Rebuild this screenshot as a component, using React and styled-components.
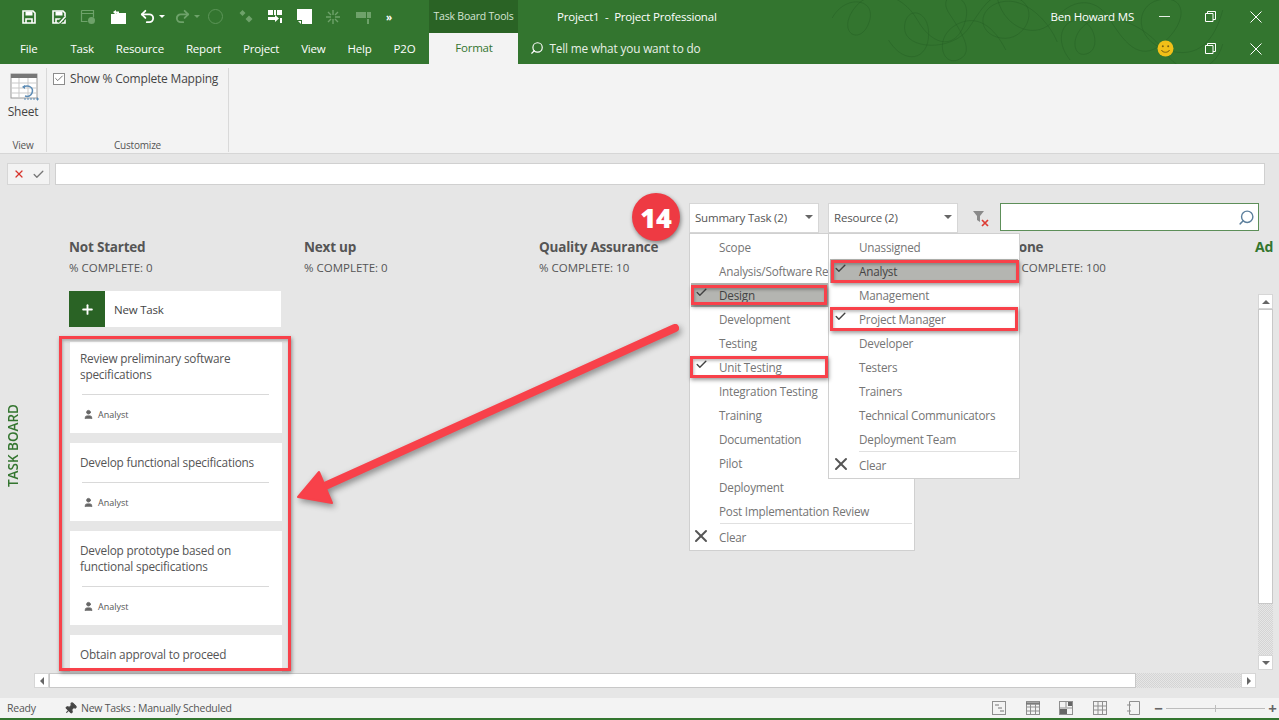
import React from "react";
import styled, { createGlobalStyle } from "styled-components";
import { Undo2, Redo2, Search, Check, X, Plus, Pin, User } from "lucide-react";

const GlobalStyle = createGlobalStyle`
    html, body {
        margin: 0;
        padding: 0;
        background: #e6e6e6;
    }
    * {
        box-sizing: border-box;
    }
    body {
        font-family: "Open Sans", "Noto Sans", sans-serif;
        color: #555;
        letter-spacing: -0.2px;
    }
`;

const GREEN = "#33752f";
const DARK_GREEN = "#2a6325";
const FADED = "#6ea26a";
const RED = "#f8414a";

const summaryItems = [
    { label: "Scope" },
    { label: "Analysis/Software Re" },
    { label: "Design", checked: true, selected: true },
    { label: "Development" },
    { label: "Testing" },
    { label: "Unit Testing", checked: true },
    { label: "Integration Testing" },
    { label: "Training" },
    { label: "Documentation" },
    { label: "Pilot" },
    { label: "Deployment" },
    { label: "Post Implementation Review" },
];

const resourceItems = [
    { label: "Unassigned" },
    { label: "Analyst", checked: true, selected: true },
    { label: "Management" },
    { label: "Project Manager", checked: true },
    { label: "Developer" },
    { label: "Testers" },
    { label: "Trainers" },
    { label: "Technical Communicators" },
    { label: "Deployment Team" },
];

const columns = [
    { name: "Not Started", pct: 0 },
    { name: "Next up", pct: 0 },
    { name: "Quality Assurance", pct: 10 },
    { name: "", pct: null },
    { name: "Done", pct: 100 },
];

const tasks = [
    { title: "Review preliminary software specifications", owner: "Analyst" },
    { title: "Develop functional specifications", owner: "Analyst" },
    { title: "Develop prototype based on functional specifications", owner: "Analyst" },
    { title: "Obtain approval to proceed" },
];

const tabs = ["File", "Task", "Resource", "Report", "Project", "View", "Help", "P2O"];

// quick access toolbar drawings, white on green
const SaveIcon = ({ pen }) => (
    <svg width="16" height="16" viewBox="0 0 16 16" fill="none" stroke="#fff" strokeWidth="1.6">
        <path d="M2 2h10l2 2v10H2z" />
        <path d="M4.500 2.500h7v4h-7z" fill="#fff" stroke="none" />
        <path d="M5 14v-4h6v4" />
        {pen && <path d="M8 14l6-6" stroke={GREEN} strokeWidth="4" />}
        {pen && <path d="M8.500 14l5.500-6" strokeWidth="1.400" />}
    </svg>
);

const FolderIcon = () => (
    <svg width="17" height="16" viewBox="0 0 17 16">
        <path d="M1 5h5l1-1h9v11H1z" fill="#fff" />
        <path d="M3 3l3-2v1.500h3v2H6V6z" fill="#fff" />
    </svg>
);

const GhostDoc = () => (
    <svg width="16" height="16" viewBox="0 0 16 16" fill="none" stroke={FADED} strokeWidth="1.200">
        <path d="M1.500 1.500h12v7M1.500 1.500v11h6M1.500 4.500h12" />
        <circle cx="11.500" cy="11.500" r="3.500" fill={FADED} stroke="none" />
    </svg>
);

const Diamonds = () => (
    <svg width="16" height="16" viewBox="0 0 16 16" fill={FADED}>
        <path d="M4.500 1l3 3-3 3-3-3zM11 6.500l3.500 3.500-3.500 3.500-3.500-3.500z" />
    </svg>
);

const LinkIcon = () => (
    <svg width="16" height="16" viewBox="0 0 16 16" fill="#fff">
        <path d="M1 1h5v5H1zM10 1h5v5h-5zM7 1h2v5H7z" />
        <path d="M1 8h7V6l4 3.500L8 13v-2H1z" />
        <path d="M13 9h2v5h-2z" />
    </svg>
);

const PageIcon = () => (
    <svg width="15" height="15" viewBox="0 0 15 15" fill="#fff">
        <path d="M0 0h15v15H5V11H0z" />
        <path d="M1 12h3v3z" />
    </svg>
);

const SplitIcon = () => (
    <svg width="14" height="14" viewBox="0 0 14 14" stroke={FADED} strokeWidth="1.400">
        <path d="M7 0v5M7 9v5M0 7h5M9 7h5M2 2l3 3M12 2L9 5M2 12l3-3M12 12L9 9" />
    </svg>
);

const GhostBars = () => (
    <svg width="16" height="16" viewBox="0 0 16 16" fill={FADED}>
        <path d="M0 3h10v6H0zM11 3h4v6h-4z" />
        <path d="M11 10h2v5h-2z" />
    </svg>
);

const SheetIcon = () => (
    <svg width="30" height="30" viewBox="0 0 30 30" fill="none">
        <rect x="1" y="1" width="26" height="24" fill="#fff" stroke="#9a9a9a" />
        <rect x="1" y="1" width="26" height="4" fill="#777" />
        <path d="M1 10h26M1 15h26M1 20h26M9 5v20M18 5v20" stroke="#c9c9c9" />
        <path d="M13 14c6-3 11 1 9 6-1 3-4 4-7 3" stroke="#5b8bb5" strokeWidth="1.500" />
        <path d="M12 14l3-2v4z" fill="#5b8bb5" />
        <path d="M14 26h14" stroke="#5b8bb5" strokeDasharray="2 1" />
        <path d="M27 24l2 2-2 2z" fill="#5b8bb5" />
    </svg>
);

const FunnelClear = () => (
    <svg width="18" height="18" viewBox="0 0 18 18">
        <path d="M1 2h11L8 7v6L5 11V7z" fill="#8a8a8a" />
        <path d="M10 11l6 6M16 11l-6 6" stroke="#dd3b33" strokeWidth="1.700" />
    </svg>
);

const Smiley = () => (
    <svg width="17" height="17" viewBox="0 0 17 17">
        <circle cx="8.500" cy="8.500" r="8" fill="#f2c018" />
        <circle cx="5.800" cy="6.300" r="1" fill="#7a6210" />
        <circle cx="11.200" cy="6.300" r="1" fill="#7a6210" />
        <path d="M4.500 10c1 3 7 3 8 0" fill="none" stroke="#7a6210" strokeWidth="1" />
    </svg>
);

const RestoreIcon = () => (
    <svg width="11" height="11" viewBox="0 0 11 11" fill="none" stroke="#fff">
        <path d="M.5 2.500h7.500v8H.5zM2.500 2.500V.5h8v8H8" />
    </svg>
);

const ThinX = () => (
    <svg width="12" height="12" viewBox="0 0 12 12" stroke="#fff">
        <path d="M.5.5l11 11M11.500.5l-11 11" />
    </svg>
);

const StatusView = ({ kind }) => (
    <svg width="15" height="14" viewBox="0 0 15 14" fill="none" stroke="#8f8f8f">
        {kind !== "form" && <rect x=".5" y=".5" width="13" height="13" fill="#f3f3f3" />}
        {kind === "gantt" && <path d="M3 4h4M6 7h4M8 10h4" stroke="#777" />}
        {kind === "calendar" && <path d="M.5 2h13M.5 3h13" stroke="#555" />}
        {kind === "calendar" && <path d="M.5 6h13M.5 10h13M4.500 3v10M9.500 3v10" />}
        {kind === "board" && <path d="M.5 7h13M7 .5v6" />}
        {kind === "board" && <path d="M1 8h7v5H1z M9 1h4v4H9z" fill="#666" stroke="none" />}
        {kind === "grid" && <path d="M.5 5h13M.5 9h13M5 .5v13M9.500 .5v13" />}
        {kind === "form" && <path d="M3.500 .5h10v13h-10zM1 4h4M1 10h4" />}
    </svg>
);

const ArrowOverlay = () => (
    <ArrowSvg viewBox="0 0 1279 720">
        <path d="M675 328L325 486" stroke={RED} strokeWidth="8" strokeLinecap="round" fill="none" />
        <path d="M298 497L319 472L332 503z" fill={RED} stroke={RED} strokeWidth="2" strokeLinejoin="round" />
    </ArrowSvg>
);

const Swirls = () => (
    <SwirlSvg viewBox="0 0 560 64" preserveAspectRatio="none" fill="none" stroke="#235c22" strokeOpacity=".45" strokeWidth="1">
        <path d="M4 18C20 -6 60 -2 50 22S10 34 30 10 90 -8 110 20s50 30 60 0S130 -10 150 14s30 40 10 46-30-24 0-36 50 10 60 26" />
        <path d="M74 40c20 26 50 20 50-6s-30-28-30-6 60 24 80 0 30-40 60-30 10 44-20 40-30-30 0-36 60 20 70 40" />
        <path d="M210 0c10 30 50 40 70 20s50-26 70 0 40 44 70 20 20-46-10-40-30 40 10 50 60-10 70-40" />
        <path d="M300 60c-20-20-10-40 10-40s30 30 10 34-20-26 10-34 70 10 90 34 60 20 70-10" />
    </SwirlSvg>
);

const MenuList = ({ items, width, height, offset, indent }) => (
    <Menu $width={width} $height={height} $left={offset}>
        {items.map((item) => (
            <MenuItem key={item.label} $selected={item.selected}>
                <CheckSlot $indent={indent}>{item.checked && <Check size={13} strokeWidth={2.6} />}</CheckSlot>
                <span>{item.label}</span>
            </MenuItem>
        ))}
        <MenuDivider />
        <ClearRow>
            <CheckSlot $indent={indent} $clear>
                <X size={20} strokeWidth={2.4} />
            </CheckSlot>
            <span>Clear</span>
        </ClearRow>
    </Menu>
);

const TaskCard = ({ task }) => (
    <Card>
        <CardTitle>{task.title}</CardTitle>
        {task.owner && (
            <>
                <CardRule />
                <CardOwner>
                    <User size={11} fill="#666" strokeWidth={2} />
                    <span>{task.owner}</span>
                </CardOwner>
            </>
        )}
    </Card>
);

export default function App() {
    return (
        <Page>
            <GlobalStyle />
            <Header>
                <Swirls />
                <TitleRow>
                    <QuickAccess>
                        <QuickSlot><SaveIcon /></QuickSlot>
                        <QuickSlot><SaveIcon pen /></QuickSlot>
                        <QuickSlot><GhostDoc /></QuickSlot>
                        <QuickSlot><FolderIcon /></QuickSlot>
                        <QuickSlot $wide>
                            <Undo2 size={17} color="#fff" strokeWidth={2.6} />
                            <Caret />
                        </QuickSlot>
                        <QuickSlot $wide>
                            <Redo2 size={17} color={FADED} strokeWidth={2.6} />
                            <Caret $dim />
                        </QuickSlot>
                        <QuickSlot><GhostCircle /></QuickSlot>
                        <QuickSlot><Diamonds /></QuickSlot>
                        <QuickSlot><LinkIcon /></QuickSlot>
                        <QuickSlot><PageIcon /></QuickSlot>
                        <QuickSlot><SplitIcon /></QuickSlot>
                        <QuickSlot><GhostBars /></QuickSlot>
                        <MoreMark>»</MoreMark>
                    </QuickAccess>
                    <ContextTab>Task Board Tools</ContextTab>
                    <DocTitle>Project1&nbsp; -&nbsp; Project Professional</DocTitle>
                    <UserName>Ben Howard MS</UserName>
                    <MinimizeMark />
                    <WindowButton><RestoreIcon /></WindowButton>
                    <WindowButton><ThinX /></WindowButton>
                </TitleRow>
                <TabRow>
                    {tabs.map((tab) => (
                        <Tab key={tab} $file={tab === "File"}>{tab}</Tab>
                    ))}
                    <ActiveTab>Format</ActiveTab>
                    <TellMe>
                        <Search size={14} color="#fff" style={{ transform: "scaleX(-1)" }} />
                        <span>Tell me what you want to do</span>
                    </TellMe>
                    <SmileSlot><Smiley /></SmileSlot>
                    <WindowButton><RestoreIcon /></WindowButton>
                    <WindowButton><ThinX /></WindowButton>
                </TabRow>
            </Header>

            <Ribbon>
                <RibbonGroup $width={47}>
                    <GroupBody $center>
                        <SheetIcon />
                        <SheetLabel>Sheet</SheetLabel>
                    </GroupBody>
                    <GroupLabel>View</GroupLabel>
                </RibbonGroup>
                <RibbonGroup $width={182}>
                    <GroupBody>
                        <CheckRow>
                            <CheckBox><Check size={11} strokeWidth={2} /></CheckBox>
                            <span>Show % Complete Mapping</span>
                        </CheckRow>
                    </GroupBody>
                    <GroupLabel>Customize</GroupLabel>
                </RibbonGroup>
            </Ribbon>

            <FormulaBar>
                <FormulaButtons>
                    <X size={12} color="#d8342c" strokeWidth={2.4} />
                    <Check size={13} color="#777" strokeWidth={2.4} />
                </FormulaButtons>
                <FormulaInput />
            </FormulaBar>

            <Board>
                <FilterBar>
                    <FilterSelect $width={130}>
                        <span>Summary Task (2)</span>
                        <SelectCaret />
                    </FilterSelect>
                    <FilterSelect $width={130}>
                        <span>Resource (2)</span>
                        <SelectCaret />
                    </FilterSelect>
                    <FunnelSlot><FunnelClear /></FunnelSlot>
                    <SearchBox>
                        <Search size={17} color="#5c7f9c" style={{ transform: "scaleX(-1)" }} />
                    </SearchBox>
                </FilterBar>

                <BoardBody>
                    <Rail>
                        <RailText>TASK BOARD</RailText>
                    </Rail>
                    <Columns>
                        {columns.map((col, i) => (
                            <Column key={i}>
                                <ColumnName>{col.name}</ColumnName>
                                <ColumnPct>{col.pct !== null && `% COMPLETE: ${col.pct}`}</ColumnPct>
                                {i === 0 && (
                                    <>
                                        <NewTask>
                                            <PlusBox><Plus size={15} color="#fff" strokeWidth={3} /></PlusBox>
                                            <span>New Task</span>
                                        </NewTask>
                                        <CardList>
                                            {tasks.map((task) => (
                                                <TaskCard key={task.title} task={task} />
                                            ))}
                                        </CardList>
                                    </>
                                )}
                            </Column>
                        ))}
                        <AddColumn>Ad</AddColumn>
                    </Columns>
                    <VScroll>
                        <ScrollBtn><TriUp /></ScrollBtn>
                        <VThumb />
                        <VTrack />
                        <ScrollBtn><TriDown /></ScrollBtn>
                    </VScroll>
                </BoardBody>

                <HScroll>
                    <ScrollBtn><TriLeft /></ScrollBtn>
                    <HThumb />
                    <HTrack />
                    <ScrollBtn><TriRight /></ScrollBtn>
                </HScroll>

                <MenuList items={summaryItems} width={226} height={318} offset={689} indent={28} />
                <MenuList items={resourceItems} width={192} height={246} offset={828} indent={29} />
            </Board>

            <StatusBar>
                <ReadyText>Ready</ReadyText>
                <Pin size={13} color="#444" fill="#444" style={{ transform: "rotate(45deg)" }} />
                <StatusText>New Tasks : Manually Scheduled</StatusText>
                <StatusViews>
                    <StatusView kind="gantt" />
                    <StatusView kind="calendar" />
                    <StatusView kind="board" />
                    <StatusView kind="grid" />
                    <StatusView kind="form" />
                </StatusViews>
                <ZoomMark>−</ZoomMark>
                <ZoomTrack />
                <ZoomMark>+</ZoomMark>
            </StatusBar>

            <Badge>14</Badge>
            <ArrowOverlay />
            <Callout $x={59} $y={336} $w={232} $h={335} />
            <Callout $x={691} $y={285} $w={136} $h={20} />
            <Callout $x={690} $y={356} $w={138} $h={22} />
            <Callout $x={831} $y={260} $w={188} $h={23} />
            <Callout $x={830} $y={307} $w={188} $h={24} />
        </Page>
    );
}

const Page = styled.div`
    position: relative;
    width: 1279px;
    height: 720px;
    overflow: hidden;
    display: flex;
    flex-direction: column;
    background: #e6e6e6;
`;

const Header = styled.header`
    position: relative;
    height: 64px;
    background: ${GREEN};
    color: #fff;
    flex-shrink: 0;
`;

const SwirlSvg = styled.svg`
    position: absolute;
    left: 829px;
    top: 0;
    width: 450px;
    height: 64px;
`;

const TitleRow = styled.div`
    position: relative;
    display: flex;
    align-items: center;
    height: 33px;
`;

const QuickAccess = styled.div`
    display: flex;
    align-items: center;
    width: 429px;
    padding-left: 21px;
`;

const QuickSlot = styled.div`
    width: ${(p) => (p.$wide ? "34.500px" : "29.500px")};
    display: flex;
    align-items: center;
    gap: 3px;
`;

const Caret = styled.span`
    width: 0;
    height: 0;
    border-left: 3px solid transparent;
    border-right: 3px solid transparent;
    border-top: 3px solid ${(p) => (p.$dim ? FADED : "#fff")};
`;

const GhostCircle = styled.span`
    display: block;
    width: 15px;
    height: 15px;
    border: 1px solid #5c9558;
    border-radius: 50%;
`;

const MoreMark = styled.span`
    font-size: 10px;
    margin-left: 1px;
    font-weight: 700;
`;

const ContextTab = styled.div`
    width: 89px;
    height: 33px;
    background: ${DARK_GREEN};
    font-size: 10.500px;
    line-height: 33px;
    text-align: center;
    white-space: nowrap;
    color: #d5e4d3;
`;

const DocTitle = styled.div`
    margin-left: 39px;
    font-size: 11.500px;
    white-space: nowrap;
    flex: 1;
`;

const UserName = styled.div`
    font-size: 11.500px;
    white-space: nowrap;
    margin-right: 25px;
`;

const MinimizeMark = styled.span`
    display: block;
    flex-shrink: 0;
    width: 11px;
    height: 1px;
    background: #e6efe5;
    margin-right: 17px;
`;

const WindowButton = styled.div`
    width: 46px;
    display: flex;
    justify-content: center;
    flex-shrink: 0;
`;

const TabRow = styled.div`
    position: relative;
    display: flex;
    align-items: center;
    height: 31px;
    padding-left: 9px;
`;

const Tab = styled.div`
    padding: 0 11px 1px;
    margin-right: ${(p) => (p.$file ? "11px" : "0")};
    font-size: 11.500px;
    letter-spacing: -0.2px;
    white-space: nowrap;
`;

const ActiveTab = styled.div`
    width: 89px;
    height: 31px;
    margin-left: 3px;
    background: #f3f3f3;
    color: ${GREEN};
    font-size: 11.500px;
    line-height: 29px;
    text-align: center;
`;

const TellMe = styled.div`
    display: flex;
    align-items: center;
    gap: 5px;
    margin-left: 12px;
    padding-bottom: 1px;
    font-size: 11.800px;
    letter-spacing: -0.15px;
    color: #e8f0e7;
    flex: 1;
`;

const SmileSlot = styled.div`
    margin-right: 13px;
    display: flex;
`;

const Ribbon = styled.section`
    display: flex;
    height: 90px;
    flex-shrink: 0;
    background: #f3f3f3;
    border-bottom: 1px solid #d6d6d6;
    padding-top: 4px;
`;

const RibbonGroup = styled.div`
    width: ${(p) => p.$width}px;
    display: flex;
    flex-direction: column;
    border-right: 1px solid #d9d9d9;
    margin-bottom: 1px;
`;

const GroupBody = styled.div`
    flex: 1;
    display: flex;
    flex-direction: column;
    align-items: ${(p) => (p.$center ? "center" : "flex-start")};
    padding-top: ${(p) => (p.$center ? "5px" : "2px")};
    padding-left: ${(p) => (p.$center ? "3px" : "6px")};
`;

const SheetLabel = styled.span`
    font-size: 12px;
    line-height: 16px;
    margin-top: 1px;
    margin-left: -3px;
    color: #444;
`;

const GroupLabel = styled.div`
    font-size: 10px;
    line-height: 14px;
    text-align: center;
    color: #555;
`;

const CheckRow = styled.label`
    display: flex;
    align-items: center;
    gap: 5px;
    font-size: 12px;
    color: #444;
    white-space: nowrap;
`;

const CheckBox = styled.span`
    width: 12px;
    height: 12px;
    border: 1px solid #8c8c8c;
    background: #fff;
    display: flex;
    align-items: center;
    justify-content: center;
    color: #555;
`;

const FormulaBar = styled.div`
    display: flex;
    gap: 5px;
    height: 36px;
    flex-shrink: 0;
    padding: 9px 14px 5px 7px;
`;

const FormulaButtons = styled.div`
    width: 43px;
    display: flex;
    align-items: center;
    justify-content: center;
    gap: 7px;
    background: #f3f3f3;
    border: 1px solid #d6d6d6;
`;

const FormulaInput = styled.div`
    flex: 1;
    background: #fff;
    border: 1px solid #d0d0d0;
`;

const Board = styled.main`
    flex: 1;
    min-height: 0;
    display: flex;
    flex-direction: column;
`;

const FilterBar = styled.div`
    display: flex;
    align-items: flex-start;
    height: 43px;
    padding: 13px 0 0 689px;
    gap: 9px;
    flex-shrink: 0;
`;

const FilterSelect = styled.div`
    width: ${(p) => p.$width}px;
    height: 30px;
    display: flex;
    align-items: center;
    justify-content: space-between;
    padding: 0 5px 2px 5px;
    background: #fff;
    border: 1px solid #d6d6d6;
    font-size: 11.500px;
    color: #555;
    white-space: nowrap;
`;

const SelectCaret = styled.span`
    width: 0;
    height: 0;
    margin-right: 0;
    border-left: 4px solid transparent;
    border-right: 4px solid transparent;
    border-top: 4px solid #666;
`;

const FunnelSlot = styled.div`
    width: 33px;
    height: 30px;
    padding: 6px 0 0 5px;
`;

const SearchBox = styled.div`
    width: 259px;
    height: 28px;
    display: flex;
    align-items: center;
    justify-content: flex-end;
    padding-right: 3px;
    margin-left: -9px;
    background: #fff;
    border: 1px solid #5d8f59;
`;

const BoardBody = styled.div`
    position: relative;
    flex: 1;
    min-height: 0;
    display: flex;
    align-items: stretch;
`;

const Rail = styled.div`
    width: 69px;
    flex-shrink: 0;
    display: flex;
    align-items: center;
    padding-left: 4px;
    padding-bottom: 13px;
`;

const RailText = styled.span`
    writing-mode: vertical-rl;
    transform: rotate(180deg);
    font-size: 13.500px;
    font-weight: 600;
    letter-spacing: 0;
    color: ${GREEN};
    white-space: nowrap;
`;

const Columns = styled.div`
    flex: 1;
    min-width: 0;
    display: flex;
    overflow: hidden;
`;

const Column = styled.div`
    width: 235px;
    flex-shrink: 0;
    display: flex;
    flex-direction: column;
    padding-top: 4px;
`;

const ColumnName = styled.div`
    font-size: 13.500px;
    line-height: 20px;
    height: 20px;
    font-weight: 700;
    color: #555;
    white-space: nowrap;
`;

const ColumnPct = styled.div`
    margin-top: 3px;
    height: 16px;
    font-size: 11.500px;
    line-height: 16px;
    letter-spacing: 0;
    color: #555;
    white-space: nowrap;
`;

const AddColumn = styled.div`
    flex-shrink: 0;
    padding-top: 4px;
    margin-left: 11px;
    font-size: 14px;
    line-height: 20px;
    font-weight: 700;
    color: ${GREEN};
`;

const NewTask = styled.div`
    width: 212px;
    height: 36px;
    margin-top: 15px;
    display: flex;
    align-items: center;
    gap: 9px;
    background: #fff;
    font-size: 11.500px;
    color: #444;
    flex-shrink: 0;
`;

const PlusBox = styled.span`
    width: 36px;
    height: 36px;
    display: flex;
    align-items: center;
    justify-content: center;
    background: ${DARK_GREEN};
`;

const CardList = styled.div`
    flex: 1;
    min-height: 0;
    overflow: hidden;
    margin-top: 15px;
    margin-left: 1px;
`;

const Card = styled.article`
    width: 212px;
    min-height: 78px;
    background: #fff;
    padding: 10.500px 10px 0;
    margin-bottom: 10px;
    &:first-child {
        margin-top: -3px;
    }
`;

const CardTitle = styled.div`
    font-size: 11.800px;
    line-height: 16px;
    color: #555;
`;

const CardRule = styled.div`
    height: 1px;
    margin: 12.500px 3px 0 2px;
    background: #d9d9d9;
`;

const CardOwner = styled.div`
    display: flex;
    align-items: center;
    gap: 4px;
    height: 38px;
    padding: 1px 0 0 3px;
    font-size: 9px;
    letter-spacing: 0;
    color: #555;
    svg {
        color: #666;
    }
`;

const VScroll = styled.div`
    position: absolute;
    right: 6px;
    top: 61px;
    bottom: 2px;
    width: 15px;
    display: flex;
    flex-direction: column;
`;

const ScrollBtn = styled.div`
    width: 15px;
    height: 15px;
    flex-shrink: 0;
    display: flex;
    align-items: center;
    justify-content: center;
    background: #fff;
    border: 1px solid #d6d6d6;
`;

const VThumb = styled.div`
    height: 295px;
    background: #fff;
    border: 1px solid #c8c8c8;
`;

const VTrack = styled.div`
    flex: 1;
    background: repeating-conic-gradient(#d4d4d4 0 25%, #e6e6e6 0 50%) 0 0 / 2px 2px;
`;

const HScroll = styled.div`
    display: flex;
    height: 15px;
    margin: 1px 23px 10px 34px;
    flex-shrink: 0;
`;

const HThumb = styled.div`
    width: 1087px;
    background: #fff;
    border: 1px solid #c8c8c8;
`;

const HTrack = styled.div`
    flex: 1;
    background: repeating-conic-gradient(#d4d4d4 0 25%, #e6e6e6 0 50%) 0 0 / 2px 2px;
`;

const TriUp = styled.span`
    border-left: 4px solid transparent;
    border-right: 4px solid transparent;
    border-bottom: 4px solid #666;
`;

const TriDown = styled.span`
    border-left: 4px solid transparent;
    border-right: 4px solid transparent;
    border-top: 4px solid #666;
`;

const TriLeft = styled.span`
    border-top: 4px solid transparent;
    border-bottom: 4px solid transparent;
    border-right: 4px solid #666;
`;

const TriRight = styled.span`
    border-top: 4px solid transparent;
    border-bottom: 4px solid transparent;
    border-left: 4px solid #666;
`;

const Menu = styled.div`
    position: absolute;
    left: ${(p) => p.$left}px;
    top: 233px;
    width: ${(p) => p.$width}px;
    height: ${(p) => p.$height}px;
    padding-top: 1px;
    background: #fff;
    border: 1px solid #d0d0d0;
    overflow: hidden;
`;

const MenuItem = styled.div`
    display: flex;
    align-items: center;
    height: 24px;
    margin: 0 1px;
    background: ${(p) => (p.$selected ? "#b4b5b1" : "transparent")};
    font-size: 11.700px;
    white-space: nowrap;
    color: ${(p) => (p.$selected ? "#444" : "#757575")};
`;

const CheckSlot = styled.span`
    width: ${(p) => p.$indent}px;
    flex-shrink: 0;
    display: flex;
    justify-content: center;
    color: ${(p) => (p.$clear ? "#555" : "#444")};
    margin-top: ${(p) => (p.$clear ? "-2px" : "-5px")};
    padding-right: 8px;
`;

const MenuDivider = styled.div`
    height: 1px;
    margin: 0 2px 0 30px;
    background: #e0e0e0;
`;

const ClearRow = styled.div`
    display: flex;
    align-items: center;
    height: 26px;
    font-size: 11.700px;
    color: #757575;
    margin: 0 1px;
`;

const StatusBar = styled.footer`
    display: flex;
    align-items: center;
    height: 22px;
    flex-shrink: 0;
    padding: 0 1px 0 7px;
    background: #f3f3f3;
    border-bottom: 2px solid ${GREEN};
    font-size: 10.500px;
    letter-spacing: -0.25px;
    color: #555;
`;

const ReadyText = styled.span`
    width: 57px;
`;

const StatusText = styled.span`
    margin-left: 4px;
    flex: 1;
`;

const StatusViews = styled.div`
    display: flex;
    gap: 18.500px;
    margin-right: 12px;
`;

const ZoomMark = styled.span`
    width: 11px;
    font-size: 15px;
    font-weight: 700;
    line-height: 14px;
    text-align: center;
    color: #666;
`;

const ZoomTrack = styled.span`
    position: relative;
    width: 99px;
    height: 1px;
    margin: 0 2px;
    background: #bdbdbd;
    &::after {
        content: "";
        position: absolute;
        left: 49px;
        top: -3px;
        width: 1px;
        height: 7px;
        background: #bdbdbd;
    }
`;

const Badge = styled.div`
    position: absolute;
    left: 632px;
    top: 193px;
    width: 48px;
    height: 48px;
    display: flex;
    align-items: center;
    justify-content: center;
    border-radius: 50%;
    background: #ee3a43;
    color: #fff;
    font-size: 27px;
    font-weight: 800;
    letter-spacing: 0;
    box-shadow: 1px 2px 4px rgba(0, 0, 0, 0.45);
`;

const ArrowSvg = styled.svg`
    position: absolute;
    left: 0;
    top: 0;
    width: 1279px;
    height: 720px;
    pointer-events: none;
    filter: drop-shadow(2px 3px 3px rgba(0, 0, 0, 0.4));
`;

const Callout = styled.div`
    position: absolute;
    left: ${(p) => p.$x}px;
    top: ${(p) => p.$y}px;
    width: ${(p) => p.$w}px;
    height: ${(p) => p.$h}px;
    border: 3px solid ${RED};
    pointer-events: none;
    box-shadow: 1px 2px 4px rgba(0, 0, 0, 0.4), inset 1px 2px 3px rgba(0, 0, 0, 0.25);
`;
